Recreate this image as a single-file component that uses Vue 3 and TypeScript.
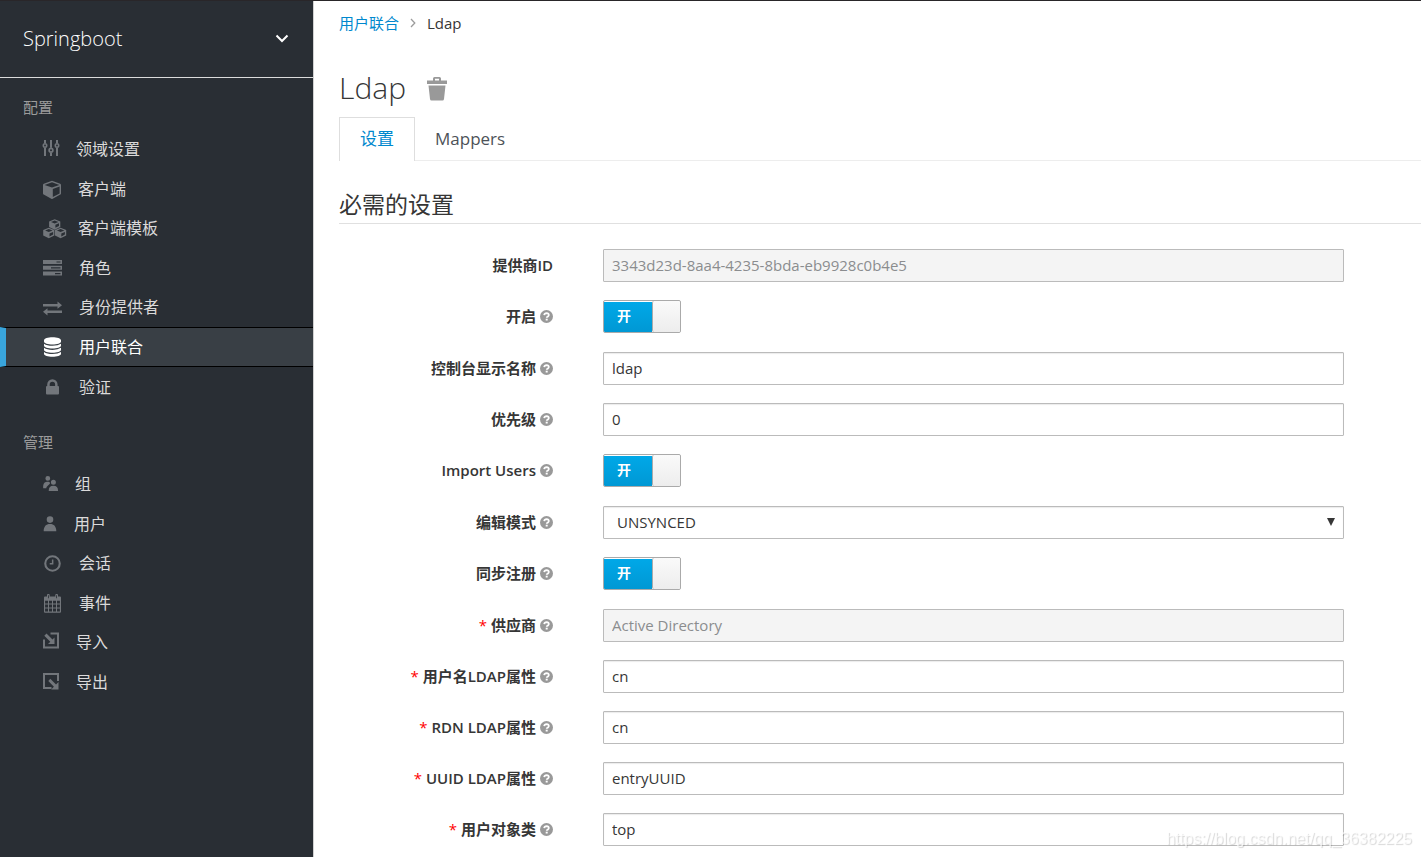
<script setup lang="ts">
import { ref } from 'vue'

interface Icon {
  width: number
  fill: string
}

interface NavItem {
  label: string
  icon: Icon
  active?: boolean
}

interface NavGroup {
  title: string
  items: NavItem[]
}

interface Field {
  id: string
  label: string
  kind: 'text' | 'switch' | 'select'
  value?: string
  disabled?: boolean
  required?: boolean
  help?: boolean
}

const smallCube = (x: number, y: number): string =>
  `M${x} ${y}l5.6 2.3v5.4l-5.6 2.8l-5.6-2.8v-5.4z` +
  `M${x} ${y + 1.2}l-3.7 1.5l3.7 1.5l3.7-1.5z` +
  `M${x + 0.7} ${y + 5.6}v3l3.6-1.8v-2.7z`

const icons: Record<string, Icon> = {
  sliders: {
    width: 16,
    fill: 'M1 1h2v3H1zM1 9h2v8H1zM7 1h2v7.5H7zM7 14h2v3H7zM13 1h2v3h-2zM13 9h2v8h-2z' +
      'M2 4a2.5 2.5 0 1 0 0 5a2.5 2.5 0 1 0 0-5zM2 5.6a.9.9 0 1 1 0 1.8a.9.9 0 1 1 0-1.8z' +
      'M8 8.5a2.7 2.7 0 1 0 0 5.4a2.7 2.7 0 1 0 0-5.4zM8 10.2a1 1 0 1 1 0 2a1 1 0 1 1 0-2z' +
      'M14 4a2.5 2.5 0 1 0 0 5a2.5 2.5 0 1 0 0-5zM14 5.6a.9.9 0 1 1 0 1.8a.9.9 0 1 1 0-1.8z'
  },
  cube: {
    width: 18,
    fill: 'M9 1.8l8.2 3q.8.3.8 1.2v8.4q0 .8-.7 1.2l-7.6 4.1q-.7.4-1.4 0l-7.6-4.1q-.7-.4-.7-1.2V6q0-.9.8-1.2z' +
      'M9 3.2L1.6 5.9L9 8.6l7.4-2.7zM9.8 10.1v8l6.8-3.7V7.6z'
  },
  cubes: {
    width: 18,
    fill: smallCube(11.7, 1.2) + smallCube(5.8, 9.8) + smallCube(17.6, 9.8)
  },
  server: {
    width: 19,
    fill: 'M0 2h19v4H0zM13.5 3.4v1.2h4V3.4zM0 7.8h19v4H0zM8 9.2v1.2h9.5V9.2zM0 13.6h19v4H0zM12 15v1.2h5.5V15z'
  },
  exchange: {
    width: 19,
    fill: 'M0 7h14.5V4.6L19 8.2l-4.5 3.6V9.5H0zM19 13.6H4.5v-2.4L0 14.8l4.5 3.8v-2.5H19z'
  },
  database: {
    width: 19,
    fill: 'M1 3.3C1 1.4 5 .2 9.5 .2s8.5 1.2 8.5 3.1v1.2C18 6.3 14 7.5 9.5 7.5S1 6.3 1 4.5z' +
      'M1 6.7q2.9 2.1 8.5 2.1t8.5-2.1v1.9c0 1.8-4 3-8.5 3S1 10.4 1 8.6z' +
      'M1 10.8q2.9 2.1 8.5 2.1t8.5-2.1v1.9c0 1.8-4 3-8.5 3S1 14.5 1 12.7z' +
      'M1 14.9q2.9 2.1 8.5 2.1t8.5-2.1v1.9c0 1.8-4 3-8.5 3S1 18.6 1 16.8z'
  },
  lock: {
    width: 19,
    fill: 'M4.2 9V7.5a5.2 5.2 0 0 1 10.400 0V9h.4q1 0 1 1v6.600q0 1-1 1H4q-1 0-1-1V10q0-1 1-1zM6.700 9h5.400V7.500a2.700 2.700 0 0 0-5.400 0z'
  },
  group: {
    width: 15,
    fill: 'M4.8 2a2.4 2.4 0 1 0 0 4.8a2.4 2.4 0 1 0 0-4.8z' +
      'M10.4 5.7a2.5 2.5 0 1 0 0 5a2.5 2.5 0 1 0 0-5z' +
      'M.2 14.2c-.3-4 .9-6.3 3.8-6.5h1.6c.8.1 1.3.6 1.5 1.3c-.2 1.2-1.5 2-2.8 3.2c-.8.7-.9 1.2-1 2z' +
      'M5.7 16.9c0-3.4 1.6-5.1 4.7-5.1s4.7 1.7 4.7 5.1z'
  },
  user: {
    width: 14,
    fill: 'M7 2.3a3.3 3.3 0 1 0 0 6.6a3.3 3.3 0 1 0 0-6.6zM.7 17.2c0-4.8 2.3-7.3 6.3-7.3s6.3 2.5 6.3 7.3z'
  },
  clock: {
    width: 19,
    fill: 'M9.5 2.2a8.3 8.3 0 1 0 0 16.6a8.3 8.3 0 1 0 0-16.6zM9.5 4.3a6.2 6.2 0 1 1 0 12.4a6.2 6.2 0 1 1 0-12.4z' +
      'M8.9 6.5h1.5v5H6.7V10h2.2z'
  },
  calendar: {
    width: 19,
    fill: 'M2 3.5h2V2q0-1 1-1h.7q1 0 1 1v1.5h5.6V2q0-1 1-1h.7q1 0 1 1v1.5h2q1 0 1 1V18.8q0 1-1 1H2q-1 0-1-1V4.5q0-1 1-1z' +
      'M5 2.3v3h.8v-3zM13.2 2.3v3h.8v-3z' +
      'M2.1 7.7v2.9h2.9V7.7zM6 7.7v2.9h3V7.7zM10 7.7v2.9h3V7.7zM14 7.7v2.9h2.9V7.7z' +
      'M2.1 11.6v3h2.9v-3zM6 11.6v3h3v-3zM10 11.6v3h3v-3zM14 11.6v3h2.9v-3z' +
      'M2.1 15.6v3h2.9v-3zM6 15.6v3h3v-3zM10 15.6v3h3v-3zM14 15.6v3h2.9v-3z'
  },
  importIcon: {
    width: 16,
    fill: 'M7.5.5H16v16H0V7.5h2v7h12v-12H7.5zM3.5 1.5l6 6l2-2V12H5l2.3-2.3l-6-6z'
  },
  exportIcon: {
    width: 16,
    fill: 'M0 1h16v8h-2V3H2v12h6.500v2H0zM7.300 6.700l5.700 5.700l2.500-2.400V17.500H8.200l2.700-2.700L5.300 9z'
  }
}

const groups: NavGroup[] = [
  {
    title: '配置',
    items: [
      { label: '领域设置', icon: icons.sliders },
      { label: '客户端', icon: icons.cube },
      { label: '客户端模板', icon: icons.cubes },
      { label: '角色', icon: icons.server },
      { label: '身份提供者', icon: icons.exchange },
      { label: '用户联合', icon: icons.database, active: true },
      { label: '验证', icon: icons.lock }
    ]
  },
  {
    title: '管理',
    items: [
      { label: '组', icon: icons.group },
      { label: '用户', icon: icons.user },
      { label: '会话', icon: icons.clock },
      { label: '事件', icon: icons.calendar },
      { label: '导入', icon: icons.importIcon },
      { label: '导出', icon: icons.exportIcon }
    ]
  }
]

const fields: Field[] = [
  { id: 'provider-id', label: '提供商ID', kind: 'text', value: '3343d23d-8aa4-4235-8bda-eb9928c0b4e5', disabled: true },
  { id: 'enabled', label: '开启', kind: 'switch', help: true },
  { id: 'display-name', label: '控制台显示名称', kind: 'text', value: 'ldap', help: true },
  { id: 'priority', label: '优先级', kind: 'text', value: '0', help: true },
  { id: 'import-users', label: 'Import Users', kind: 'switch', help: true },
  { id: 'edit-mode', label: '编辑模式', kind: 'select', value: 'UNSYNCED', help: true },
  { id: 'sync-registrations', label: '同步注册', kind: 'switch', help: true },
  { id: 'vendor', label: '供应商', kind: 'text', value: 'Active Directory', disabled: true, required: true, help: true },
  { id: 'username-attribute', label: '用户名LDAP属性', kind: 'text', value: 'cn', required: true, help: true },
  { id: 'rdn-attribute', label: 'RDN LDAP属性', kind: 'text', value: 'cn', required: true, help: true },
  { id: 'uuid-attribute', label: 'UUID LDAP属性', kind: 'text', value: 'entryUUID', required: true, help: true },
  { id: 'object-classes', label: '用户对象类', kind: 'text', value: 'top', required: true, help: true }
]

const values = ref<Record<string, string>>(
  Object.fromEntries(fields.map((f) => [f.id, f.value ?? '']))
)

const switches = ref<Record<string, boolean>>({
  enabled: true,
  'import-users': true,
  'sync-registrations': true
})
</script>

<template>
  <div class="app">
    <aside class="sidebar">
      <button class="realm" type="button">
        <span>Springboot</span>
        <svg width="14" height="10" viewBox="0 0 14 10" aria-hidden="true">
          <path d="M1.500 1.500L7 7l5.500-5.500" fill="none" stroke="#fff" stroke-width="2" />
        </svg>
      </button>
      <nav v-for="group in groups" :key="group.title" class="nav-group">
        <h2 class="nav-title">{{ group.title }}</h2>
        <ul class="nav-list">
          <li v-for="item in group.items" :key="item.label" class="nav-item" :class="{ active: item.active }">
            <a href="#" class="nav-link">
              <svg class="nav-icon" :width="item.icon.width" height="20" :viewBox="`0 0 ${item.icon.width} 20`" aria-hidden="true">
                <path :d="item.icon.fill" fill="currentColor" fill-rule="evenodd" />
              </svg>
              <span>{{ item.label }}</span>
            </a>
          </li>
        </ul>
      </nav>
    </aside>

    <main class="content">
      <nav class="breadcrumb" aria-label="Breadcrumb">
        <a href="#">用户联合</a>
        <svg width="6" height="10" viewBox="0 0 6 10" aria-hidden="true">
          <path d="M1 1l3.800 4L1 9" fill="none" stroke="#9c9c9c" stroke-width="1.300" />
        </svg>
        <span>Ldap</span>
      </nav>

      <header class="heading">
        <h1>Ldap</h1>
        <button type="button" class="trash" aria-label="Delete">
          <svg width="20" height="24" viewBox="0 0 20 24" aria-hidden="true">
            <path
              d="M6 3.500V1.500Q6 0 7.500 0h5Q14 0 14 1.500v2h6V7H0V3.500zM8 3.500h4V1.800H8zM1.500 8.500h17L17 22q-.2 1.500-1.500 1.500h-11Q3.200 23.500 3 22z"
              fill="#999" fill-rule="evenodd" />
          </svg>
        </button>
      </header>

      <ul class="tabs">
        <li class="tab selected"><a href="#">设置</a></li>
        <li class="tab"><a href="#">Mappers</a></li>
      </ul>

      <form @submit.prevent>
        <h2 class="legend">必需的设置</h2>
        <div v-for="field in fields" :key="field.id" class="row" :class="`row-${field.kind}`">
          <div class="caption">
            <span v-if="field.required" class="star">*</span>
            <label :for="field.id">{{ field.label }}</label>
            <svg v-if="field.help" class="help" width="13" height="13" viewBox="0 0 13 13" aria-hidden="true">
              <circle cx="6.500" cy="6.500" r="6.500" fill="#999" />
              <path d="M4.200 5.100q.3-2 2.400-2q2.200.1 2.200 1.900q0 1-1.100 1.600q-1 .5-1 1.200" fill="none" stroke="#fff" stroke-width="1.800" />
              <path d="M5.700 8.700h2v1.800h-2z" fill="#fff" />
            </svg>
          </div>
          <input v-if="field.kind === 'text'" :id="field.id" v-model="values[field.id]" class="control" type="text" :disabled="field.disabled" />
          <div v-else-if="field.kind === 'select'" class="select-wrap">
            <select :id="field.id" v-model="values[field.id]" class="control">
              <option>UNSYNCED</option>
            </select>
            <svg class="caret" width="8" height="8" viewBox="0 0 8 8" aria-hidden="true">
              <path d="M0 0h8L4 8z" fill="#363636" />
            </svg>
          </div>
          <label v-else class="switch">
            <input :id="field.id" v-model="switches[field.id]" type="checkbox" />
            <span class="switch-on">开</span>
            <span class="switch-knob"></span>
          </label>
        </div>
      </form>
    </main>
    <div class="watermark">https://blog.csdn.net/qq_36382225</div>
  </div>
</template>

<style>
body {
  margin: 0;
  background: #fff;
}
</style>

<style scoped>
.app,
.app * {
  box-sizing: border-box;
}

.app {
  display: flex;
  min-height: 100vh;
  border-top: 1px solid #292629;
  font-family: "Open Sans", "Noto Sans CJK SC", sans-serif;
  font-size: 15px;
  line-height: 22px;
  color: #363636;
}

a {
  color: #0088ce;
  text-decoration: none;
}

button,
input,
select {
  font: inherit;
  color: inherit;
}

ul,
h1,
h2 {
  margin: 0;
  padding: 0;
  list-style: none;
}

.sidebar {
  flex: 0 0 314px;
  background: #292e34;
  border-right: 1px solid #d1d1d1;
}

.realm {
  display: flex;
  align-items: center;
  justify-content: space-between;
  width: 100%;
  height: 77px;
  padding: 0 24px 0 23px;
  border: 0;
  border-bottom: 1px solid #dbdbdb;
  background: none;
  color: #fff;
  font-size: 20px;
  font-weight: 300;
}

.nav-group {
  padding-top: 18px;
}

.nav-group + .nav-group {
  padding-top: 24px;
}

.nav-title {
  padding-left: 23px;
  margin-bottom: 11px;
  font-size: 15px;
  font-weight: 400;
  color: #9c9c9c;
}

.nav-item {
  height: 39px;
}

.nav-item:nth-child(odd),
.nav-item.active {
  height: 40px;
}

.nav-link {
  display: flex;
  align-items: center;
  gap: 17px;
  height: 100%;
  padding-left: 43px;
  font-size: 16px;
  color: #dbdada;
}

.nav-icon {
  flex: none;
  overflow: visible;
  color: #72767b;
}

.active .nav-link {
  padding-left: 37px;
  border-top: 1px solid #000;
  border-bottom: 1px solid #000;
  border-left: 6px solid #39a5dc;
  background: #393f45;
  color: #fff;
}

.active .nav-icon {
  color: #fff;
}

.content {
  flex: 1;
  min-width: 0;
  padding: 11px 0 10px 25px;
}

.breadcrumb {
  display: flex;
  align-items: center;
  gap: 11px;
}

.heading {
  display: flex;
  align-items: center;
  gap: 21px;
  height: 40px;
  margin-top: 34px;
}

h1 {
  font-size: 30px;
  font-weight: 300;
  line-height: 40px;
}

.trash {
  display: flex;
  padding: 2px 0 0;
  border: 0;
  background: none;
}

.tabs {
  display: flex;
  height: 44px;
  margin-top: 9px;
  border-bottom: 1px solid #ededed;
}

.tab a {
  display: block;
  height: 44px;
  padding: 0 20px;
  font-size: 17px;
  line-height: 43px;
  color: #4d5258;
}

.tab.selected a {
  border: 1px solid #dedede;
  border-bottom: 0;
  background: #fff;
  line-height: 42px;
  color: #0088ce;
}

.legend {
  margin: 26px 0 25px;
  padding-bottom: 2px;
  border-bottom: 1px solid #e0e0e0;
  font-size: 23px;
  font-weight: 400;
  line-height: 34px;
}

.row {
  display: grid;
  grid-template-columns: 214px 1fr;
  column-gap: 50px;
  height: 33px;
  margin: 0 77px 18px 0;
}

.row-switch {
  margin-bottom: 19px;
}

.caption {
  display: flex;
  align-items: center;
  justify-content: flex-end;
  gap: 4px;
  font-weight: 600;
  white-space: nowrap;
}

.caption label,
.star {
  padding-bottom: 2px;
}

.star {
  color: #f00;
  font-weight: 400;
}

.control {
  display: block;
  width: 100%;
  height: 33px;
  margin: 0;
  padding: 0 8px 2px;
  border: 1px solid #bbb;
  border-radius: 1px;
  background: #fff;
  box-shadow: inset 0 1px 1px rgba(3, 3, 3, 0.08);
}

.control:disabled {
  background: #f4f4f4;
  color: #8b8d8f;
  box-shadow: none;
}

.select-wrap {
  position: relative;
}

select.control {
  appearance: none;
  padding-left: 13px;
}

.caret {
  position: absolute;
  top: 12px;
  right: 9px;
  pointer-events: none;
}

.switch {
  position: relative;
  display: flex;
  width: 78px;
  height: 33px;
  border: 1px solid #aaa;
  border-radius: 2px;
  background: #fff;
  overflow: hidden;
}

.switch input {
  position: absolute;
  opacity: 0;
  margin: 0;
}

.switch-on {
  flex: 1;
  padding-left: 13px;
  margin-top: 1px;
  background: linear-gradient(#00a8e8, #0098d4);
  color: #fff;
  font-size: 14px;
  font-weight: 700;
  line-height: 28px;
}

.switch-knob {
  width: 28px;
  border-left: 1px solid #aaa;
  border-radius: 2px;
  background: linear-gradient(#fafafa, #ededed);
}

.watermark {
  position: fixed;
  right: 9px;
  bottom: 8px;
  font-family: "Liberation Sans", sans-serif;
  font-size: 16px;
  line-height: 20px;
  color: rgba(255, 255, 255, 0.7);
  text-shadow: 1px 1px 1px rgba(0, 0, 0, 0.16);
  pointer-events: none;
}
</style>
